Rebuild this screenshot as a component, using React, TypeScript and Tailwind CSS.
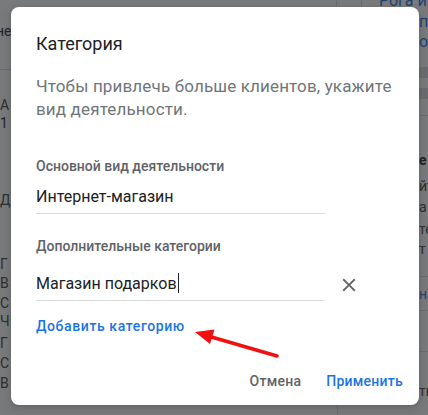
import React from "react";

function CloseIcon() {
  return (
    <svg width="22" height="22" viewBox="0 0 24 24" fill="#5f6368">
      <path d="M19 6.41L17.59 5 12 10.59 6.41 5 5 6.41 10.59 12 5 17.59 6.41 19 12 13.41 17.59 19 19 17.59 13.41 12z" />
    </svg>
  );
}

function Background() {
  return (
    <div className="flex h-full w-full bg-white text-[14px] leading-[18px] text-[#3c4043]">
      {/* left strip */}
      <div className="flex w-[11px] shrink-0 flex-col overflow-hidden">
        <div className="mt-[22px] ml-[-4px] whitespace-nowrap text-[#202124]">не</div>
        <div className="mt-[29px] h-px w-full bg-[#dadce0]" />
        <div className="mt-[26px]">А</div>
        <div className="text-[#202124]">1</div>
        <div className="mt-[59px]">Д</div>
        <div className="mt-[46px]">Г</div>
        <div className="mt-[1px]">В</div>
        <div className="mt-[2px]">С</div>
        <div>Ч</div>
        <div className="mt-[4px]">Г</div>
        <div className="mt-[2px]">С</div>
        <div className="mt-[2px]">В</div>
      </div>
      {/* middle */}
      <div className="flex min-w-0 flex-1 flex-col">
        <div className="flex h-[60px]">
          <div className="w-[325px] shrink-0" />
          <div className="w-[25px] shrink-0 border-l border-[#dadce0]" />
          <div className="relative flex-1 border-l border-[#dadce0]">
            <div className="mt-[-9px] ml-[17px] whitespace-nowrap text-[16px] leading-[20px] text-[#1a73e8]">
              Рога и
            </div>
          </div>
        </div>
        <div className="flex-1" />
        <div className="flex h-[20px]">
          <div className="w-[326px] shrink-0" />
          <div className="flex-1 border-l border-[#dadce0]" />
        </div>
      </div>
      {/* right strip */}
      <div className="flex w-[9px] shrink-0 flex-col overflow-hidden">
        <div className="mt-[12px] h-[20px] text-[16px] leading-[20px] text-[#1a73e8]">п</div>
        <div className="h-[20px] text-[16px] leading-[20px] text-[#1a73e8]">о</div>
        <div className="mt-[15px] h-[11px] w-full shrink-0 bg-[#dadce0]" />
        <div className="mt-[10px] h-[11px] w-full shrink-0 bg-[#dadce0]" />
        <div className="mt-[16px] h-px w-full shrink-0 bg-[#dadce0]" />
        <div className="mt-[34px] h-[20px] leading-[20px] font-bold text-[#202124]">е</div>
        <div className="mt-[6px] h-[20px] whitespace-nowrap leading-[20px]">йт</div>
        <div className="mt-[1px] h-[20px] leading-[20px]">а</div>
        <div className="mt-[2px] h-[20px] whitespace-nowrap leading-[20px]">те</div>
        <div className="h-[20px] leading-[20px]">т</div>
        <div className="mt-[17px] h-px w-full shrink-0 bg-[#dadce0]" />
        <div className="mt-[7px] h-[20px] whitespace-nowrap leading-[20px] text-[#1a73e8]">на</div>
        <div className="mt-[6px] h-px w-full shrink-0 bg-[#dadce0]" />
        <div className="mt-[40px] h-px w-full shrink-0 bg-[#dadce0]" />
        <div className="mt-[29px] h-[20px] whitespace-nowrap leading-[20px]">ть</div>
      </div>
    </div>
  );
}

export default function App() {
  return (
    <div className="relative h-[415px] w-[428px] overflow-hidden font-[Roboto,sans-serif]">
      <Background />
      <div className="absolute inset-0 bg-[rgba(32,33,36,0.6)]" />

      <div className="absolute left-[11px] top-[7px] flex h-[398px] w-[408px] flex-col rounded-[8px] bg-white pl-[25px] shadow-[0_1px_3px_rgba(60,64,67,0.3),0_4px_8px_3px_rgba(60,64,67,0.15)]">
        <div className="mt-[25px] text-[18px] leading-[24px] text-[#202124]">Категория</div>
        <div className="mt-[19px] whitespace-nowrap text-[17px] leading-[23px] tracking-[0.15px] text-[#70757a]">
          Чтобы привлечь больше клиентов, укажите
          <br />
          вид деятельности.
        </div>

        <div className="mt-[35px] text-[14px] font-medium leading-[20px] text-[#5f6368]">
          Основной вид деятельности
        </div>
        <div className="mt-[9px] w-[289px] border-b border-[#dadce0] pb-[4px] text-[16px] leading-[24px] text-[#202124]">
          Интернет-магазин
        </div>

        <div className="mt-[22px] text-[14px] font-medium leading-[20px] text-[#5f6368]">
          Дополнительные категории
        </div>
        <div className="mt-[16px] flex items-center">
          <div className="w-[289px] border-b border-[#dadce0] pb-[4px] text-[16px] leading-[24px] text-[#202124]">
            <span>Магазин подарков</span>
            <span className="ml-[1px] inline-block h-[20px] w-px bg-[#202124] align-[-4px]" />
          </div>
          <div className="ml-[13px] mb-[4px] flex items-center">
            <CloseIcon />
          </div>
        </div>

        <div className="mt-[15px] text-[14px] font-medium leading-[20px] tracking-[0.6px] text-[#1a73e8]">
          Добавить категорию
        </div>

        <div className="mt-[35px] flex justify-end gap-[25px] pr-[16px] text-[14px] font-medium leading-[20px] tracking-[0.25px]">
          <span className="text-[#5f6368]">Отмена</span>
          <span className="text-[#1a73e8]">Применить</span>
        </div>
      </div>

      <svg
        className="pointer-events-none absolute left-0 top-0"
        width="428"
        height="415"
        viewBox="0 0 428 415"
      >
        <line x1="277" y1="356" x2="208" y2="336" stroke="#f01010" strokeWidth="3.5" strokeLinecap="round" />
        <polygon points="195,332 214.5,329.5 210,344" fill="#f01010" />
      </svg>
    </div>
  );
}
